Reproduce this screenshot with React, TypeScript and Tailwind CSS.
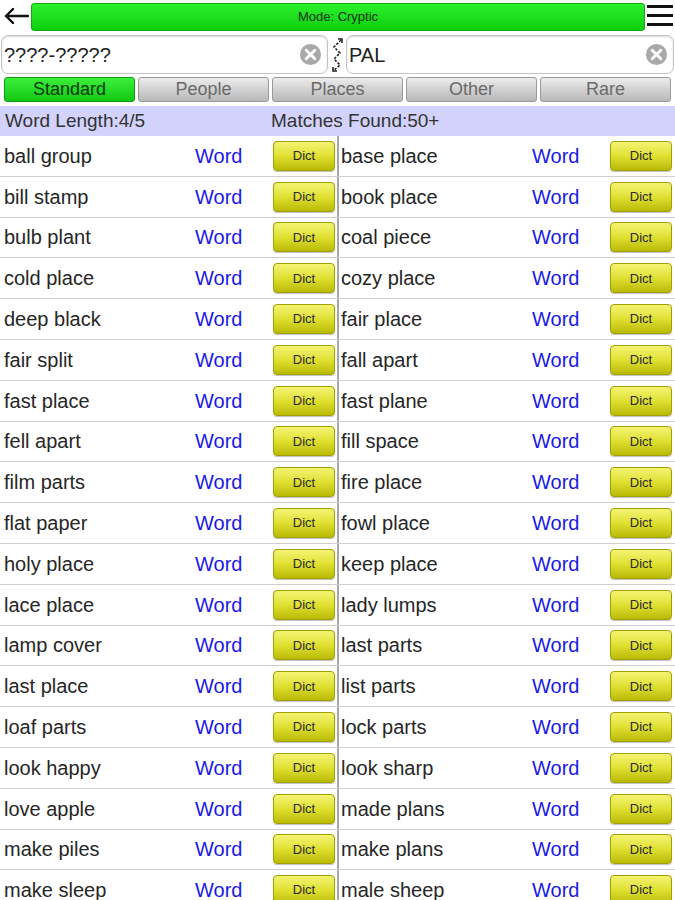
import React from "react";

const left = ["ball group","bill stamp","bulb plant","cold place","deep black","fair split","fast place","fell apart","film parts","flat paper","holy place","lace place","lamp cover","last place","loaf parts","look happy","love apple","make piles","make sleep"];
const right = ["base place","book place","coal piece","cozy place","fair place","fall apart","fast plane","fill space","fire place","fowl place","keep place","lady lumps","last parts","list parts","lock parts","look sharp","made plans","make plans","male sheep"];

function ClearIcon() {
  return (
    <svg width="23" height="23" viewBox="0 0 24 24">
      <circle cx="12" cy="12" r="11" fill="#a9a9a9" />
      <path d="M7.5 7.5 L16.5 16.5 M16.5 7.5 L7.5 16.5" stroke="#fff" strokeWidth="3" strokeLinecap="round" />
    </svg>
  );
}

function Dict() {
  return (
    <div className="w-[62px] h-[30px] rounded-[4px] border border-[#a0a000] bg-gradient-to-b from-[#f4f470] via-[#e0e030] to-[#baba00] flex items-center justify-center text-[13px] text-[#2a2a2a] shadow-[0_1px_1px_rgba(0,0,0,0.25)]">
      Dict
    </div>
  );
}

function Cell({ w, pl }: { w: string; pl: string }) {
  return (
    <div className={`flex items-center h-full ${pl}`}>
      <div className="w-[191px] text-[20px] text-[#262626] whitespace-nowrap">{w}</div>
      <div className="w-[78px] text-[20px] text-[#1a1ae6]">Word</div>
      <Dict />
    </div>
  );
}

const tabs = ["Standard", "People", "Places", "Other", "Rare"];

export default function App() {
  return (
    <div className="w-[675px] h-[900px] overflow-hidden bg-white" style={{ fontFamily: '"Liberation Sans", Arial, sans-serif' }}>
      {/* header */}
      <div className="flex items-start h-[34px]">
        <div className="w-[31px] h-[31px] flex items-center justify-center">
          <svg width="26" height="18" viewBox="0 0 26 18">
            <path d="M25 9 H3 M10 2 L3 9 L10 16" stroke="#111" strokeWidth="2.4" fill="none" strokeLinecap="round" strokeLinejoin="round" />
          </svg>
        </div>
        <div className="mt-[3px] flex-1 h-[28px] rounded-[3px] bg-gradient-to-b from-[#2cf02c] to-[#0ad00a] border border-[#12a812] flex items-center justify-center text-[13px] text-[#113311]">
          Mode: Cryptic
        </div>
        <div className="w-[30px] h-[31px] flex flex-col justify-center items-end gap-[6px] pr-[2px]">
          <div className="w-[26px] h-[3px] bg-[#111]" />
          <div className="w-[26px] h-[3px] bg-[#111]" />
          <div className="w-[26px] h-[3px] bg-[#111]" />
        </div>
      </div>
      {/* inputs */}
      <div className="flex items-center h-[41px] px-[1px]">
        <div className="w-[327px] h-[39px] border border-[#c4c4c4] rounded-[7px] flex items-center pl-[2px] pr-[5px] shadow-[inset_0_1px_2px_rgba(0,0,0,0.15)]">
          <div className="flex-1 text-[20px] text-[#222]">????-?????</div>
          <ClearIcon />
        </div>
        <div className="w-[18px] h-[39px] flex items-center justify-center">
          <svg width="16" height="38" viewBox="0 0 16 38">
            <path d="M12 4 L5 11 L11 17 L5 23 L11 29 L4 35" stroke="#222" strokeWidth="1.6" fill="none" strokeDasharray="2.5 1.5" />
            <path d="M9 3 L13 3 L13 7 M4 31 L4 35 L8 35" stroke="#222" strokeWidth="1.5" fill="none" />
          </svg>
        </div>
        <div className="flex-1 h-[39px] border border-[#c4c4c4] rounded-[7px] flex items-center pl-[2px] pr-[5px] shadow-[inset_0_1px_2px_rgba(0,0,0,0.15)]">
          <div className="flex-1 text-[20px] text-[#222]">PAL</div>
          <ClearIcon />
        </div>
      </div>
      {/* tabs */}
      <div className="flex gap-[3px] px-[4px] pt-[2px] h-[31px]">
        {tabs.map((t, i) => (
          <div
            key={t}
            className={
              i === 0
                ? "flex-1 h-[25px] rounded-[3px] border border-[#119911] bg-gradient-to-b from-[#3af03a] to-[#0cc80c] flex items-center justify-center text-[18px] text-[#0b3a0b]"
                : "flex-1 h-[25px] rounded-[3px] border border-[#9a9a9a] bg-gradient-to-b from-[#ececec] to-[#b8b8b8] flex items-center justify-center text-[18px] text-[#6a6a6a]"
            }
          >
            {t}
          </div>
        ))}
      </div>
      {/* info */}
      <div className="flex items-center h-[30px] bg-[#d2d2fc] text-[19px] text-[#333]">
        <div className="w-[271px] pl-[5px]">Word Length:4/5</div>
        <div>Matches Found:50+</div>
      </div>
      {/* list */}
      <div className="flex flex-col">
        {left.map((l, i) => (
          <div key={l} className="flex h-[40.8px] border-b border-[#cfcfcf]">
            <div className="w-[339px] border-r-2 border-[#a6a6a6] h-full">
              <Cell w={l} pl="pl-[4px]" />
            </div>
            <div className="flex-1 h-full">
              <Cell w={right[i]} pl="pl-[2px]" />
            </div>
          </div>
        ))}
      </div>
    </div>
  );
}
